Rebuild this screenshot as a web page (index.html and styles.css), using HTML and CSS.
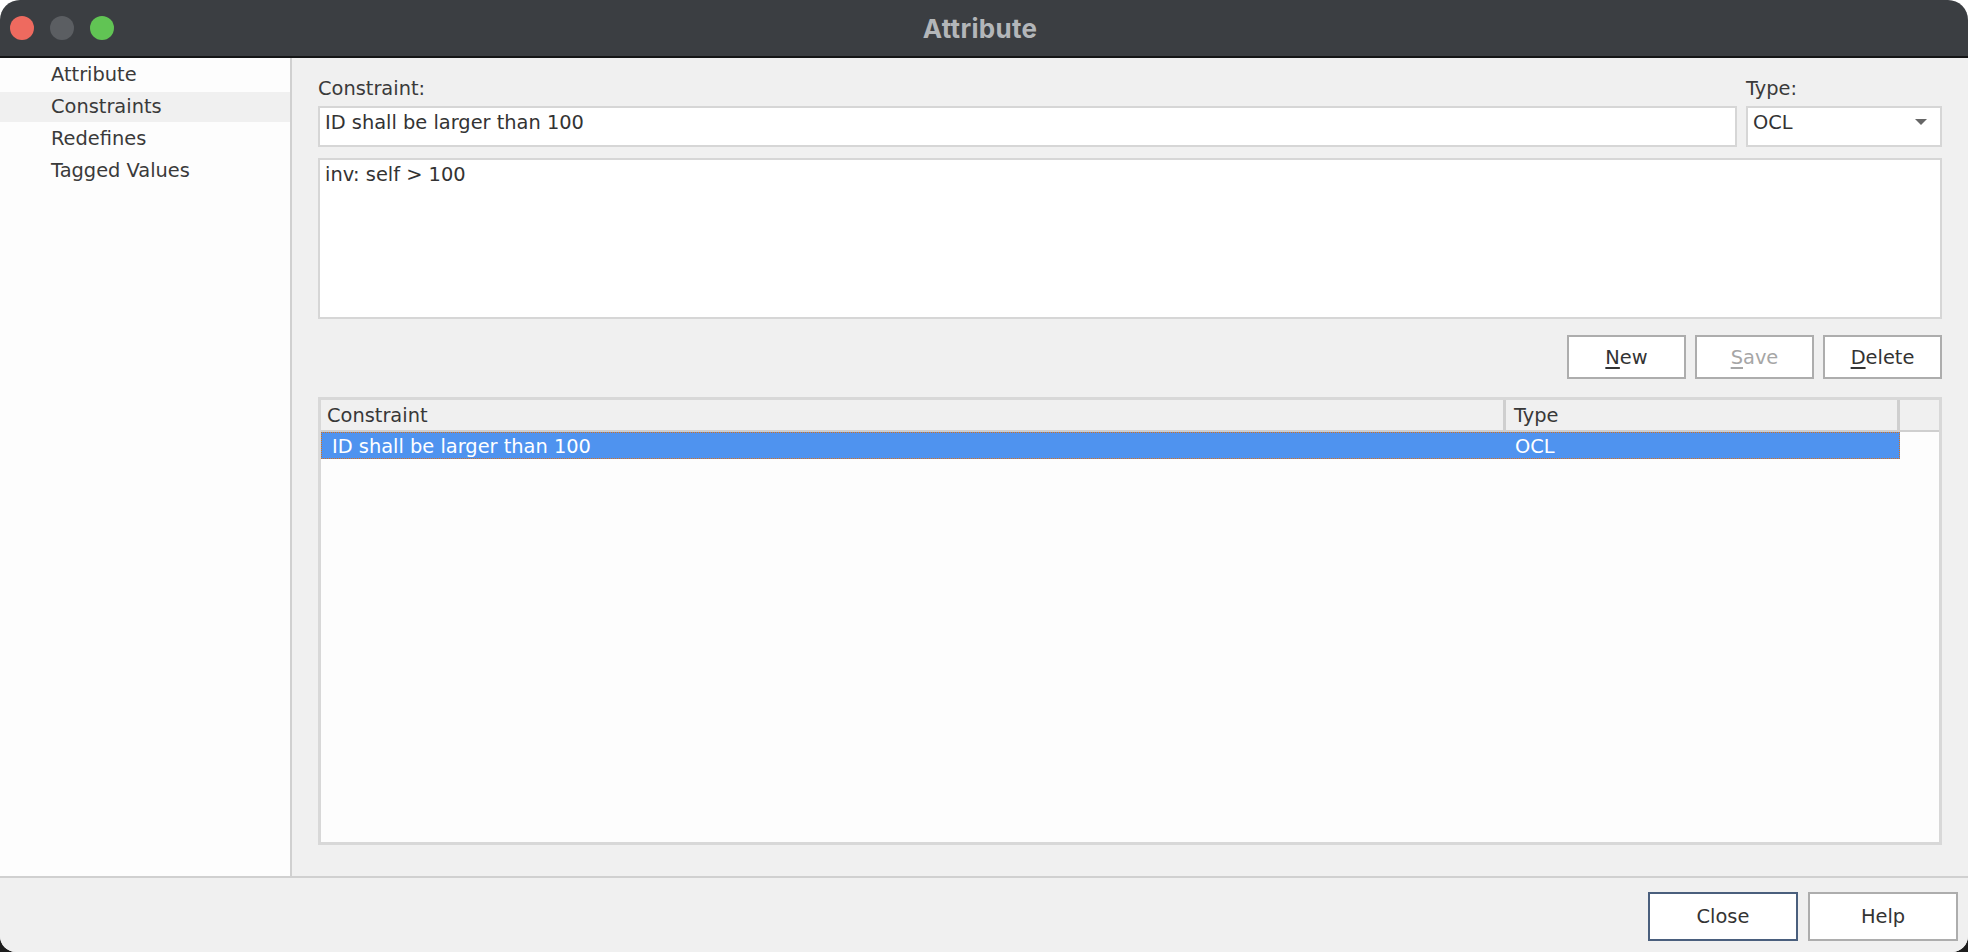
FILE: index.html
```html
<!DOCTYPE html>
<html>
<head>
<meta charset="utf-8">
<title>Attribute</title>
<link rel="stylesheet" href="styles.css">
</head>
<body>
<div class="window">
  <div class="titlebar">
    <div class="lights">
      <span class="light red"></span>
      <span class="light grey"></span>
      <span class="light green"></span>
    </div>
    <div class="title">Attribute</div>
  </div>
  <div class="content">
    <div class="sidebar">
      <div class="nav-item">Attribute</div>
      <div class="nav-item active">Constraints</div>
      <div class="nav-item">Redefines</div>
      <div class="nav-item">Tagged Values</div>
    </div>
    <div class="main">
      <div class="top-row">
        <div class="field grow">
          <div class="label">Constraint:</div>
          <div class="input">ID shall be larger than 100</div>
        </div>
        <div class="field type">
          <div class="label">Type:</div>
          <div class="input select">
            <span>OCL</span>
            <span class="arrow"></span>
          </div>
        </div>
      </div>
      <div class="textarea">inv: self &gt; 100</div>
      <div class="actions">
        <div class="btn"><u>N</u>ew</div>
        <div class="btn disabled"><u>S</u>ave</div>
        <div class="btn"><u>D</u>elete</div>
      </div>
      <div class="table">
        <div class="thead">
          <div class="th col-name">Constraint</div>
          <div class="th col-type">Type</div>
          <div class="th col-fill"></div>
        </div>
        <div class="tbody">
          <div class="tr selected">
            <div class="td col-name">ID shall be larger than 100</div>
            <div class="td col-type">OCL</div>
          </div>
        </div>
      </div>
    </div>
  </div>
  <div class="footer">
    <div class="btn big default">Close</div>
    <div class="btn big">Help</div>
  </div>
</div>
</body>
</html>
```

FILE: styles.css
```css
html, body {
  margin: 0;
  padding: 0;
}
body {
  width: 1968px;
  height: 952px;
  background: linear-gradient(to bottom, #ffffff 0, #ffffff 50%, #1e1e1e 50%, #1e1e1e 100%);
  overflow: hidden;
  font-family: "DejaVu Sans", "Liberation Sans", sans-serif;
  font-size: 19.4px;
  color: #3a3a3a;
}
.window {
  width: 1968px;
  height: 952px;
  display: flex;
  flex-direction: column;
  border-radius: 20px 20px 16px 16px;
  overflow: hidden;
  background: #f0f0f0;
}
.titlebar {
  height: 56px;
  flex: 0 0 auto;
  background: #3b3e42;
  border-top: 1px solid #6e7174;
  border-bottom: 2px solid #141516;
  box-sizing: content-box;
  margin-top: -1px;
  position: relative;
  display: flex;
  align-items: center;
  justify-content: center;
}
.lights {
  position: absolute;
  left: 10px;
  top: 16px;
  display: flex;
  gap: 16px;
}
.light {
  width: 24px;
  height: 24px;
  border-radius: 50%;
  display: block;
}
.red { background: #ee6a5f; }
.grey { background: #5b5e62; }
.green { background: #61c454; }
.title {
  font-family: "Inter", "Open Sans", sans-serif;
  font-weight: 700;
  font-size: 26px;
  color: #b3b6b9;
  letter-spacing: 0.3px;
  margin-left: -8px;
}
.content {
  flex: 1 1 auto;
  display: flex;
  min-height: 0;
}
.sidebar {
  width: 290px;
  flex: 0 0 290px;
  background: #fdfdfd;
  border-right: 2px solid #d0d0d0;
  padding-top: 2px;
}
.nav-item {
  height: 30px;
  line-height: 30px;
  margin-bottom: 2px;
  padding-left: 51px;
  color: #3a3a3a;
}
.nav-item.active {
  background: #f0f0f0;
}
.main {
  flex: 1 1 auto;
  display: flex;
  flex-direction: column;
  padding: 19px 26px 31px 26px;
  min-width: 0;
}
.top-row {
  display: flex;
  gap: 9px;
}
.field {
  display: flex;
  flex-direction: column;
}
.field.grow {
  flex: 1 1 auto;
}
.field.type {
  width: 196px;
  flex: 0 0 196px;
}
.label {
  height: 24px;
  line-height: 24px;
  margin-bottom: 5px;
  color: #3a3a3a;
}
.input {
  height: 41px;
  box-sizing: border-box;
  border: 2px solid #d6d6d6;
  background: #ffffff;
  padding: 3px 6px 0 5px;
  line-height: 24px;
  color: #333333;
}
.select {
  display: flex;
  justify-content: space-between;
  align-items: flex-start;
}
.arrow {
  width: 0;
  height: 0;
  border-left: 6px solid transparent;
  border-right: 6px solid transparent;
  border-top: 6px solid #666666;
  margin-top: 8px;
  margin-right: 7px;
}
.textarea {
  margin-top: 11px;
  height: 161px;
  box-sizing: border-box;
  border: 2px solid #d6d6d6;
  background: #ffffff;
  padding: 3px 5px;
  line-height: 24px;
  color: #333333;
}
.actions {
  display: flex;
  justify-content: flex-end;
  gap: 9px;
  margin-top: 16px;
}
.btn {
  width: 119px;
  height: 44px;
  box-sizing: border-box;
  border: 2px solid #adadad;
  background: #ffffff;
  display: flex;
  align-items: center;
  justify-content: center;
  color: #333333;
}
.btn u {
  text-decoration-thickness: 2px;
  text-underline-offset: 3px;
}
.btn.disabled {
  color: #a6a6a6;
}
.table {
  margin-top: 18px;
  flex: 1 1 auto;
  border: 3px solid #d8d8d8;
  background: #fdfdfd;
  display: flex;
  flex-direction: column;
}
.thead {
  display: flex;
  height: 32px;
  box-sizing: border-box;
  background: #f0f0f0;
  border-bottom: 2px solid #cfcfcf;
}
.th {
  line-height: 24px;
  padding-top: 4px;
  box-sizing: border-box;
  color: #383838;
}
.col-name {
  width: 1185px;
  flex: 0 0 1185px;
  padding-left: 6px;
  box-sizing: border-box;
}
.col-type {
  width: 394px;
  flex: 0 0 394px;
  padding-left: 8px;
  box-sizing: border-box;
}
.th.col-name,
.th.col-type {
  border-right: 3px solid #cfcfcf;
}
.th.col-fill {
  flex: 1 1 auto;
}
.tbody {
  flex: 1 1 auto;
}
.tr {
  display: flex;
  height: 27px;
  width: 1579px;
  box-sizing: border-box;
}
.tr.selected {
  background: #4f93ef;
  outline: 1px dotted #d8701c;
  outline-offset: -1px;
  color: #ffffff;
}
.td {
  line-height: 23px;
  padding-top: 3px;
}
.td.col-name {
  padding-left: 11px;
}
.td.col-type {
  padding-left: 9px;
}
.footer {
  flex: 0 0 76px;
  height: 76px;
  box-sizing: border-box;
  border-top: 2px solid #d0d0d0;
  background: #f0f0f0;
  display: flex;
  justify-content: flex-end;
  align-items: flex-start;
  gap: 10px;
  padding: 14px 10px 0 0;
}
.btn.big {
  width: 150px;
  height: 49px;
}
.btn.default {
  border-color: #4a5f7d;
}
```
